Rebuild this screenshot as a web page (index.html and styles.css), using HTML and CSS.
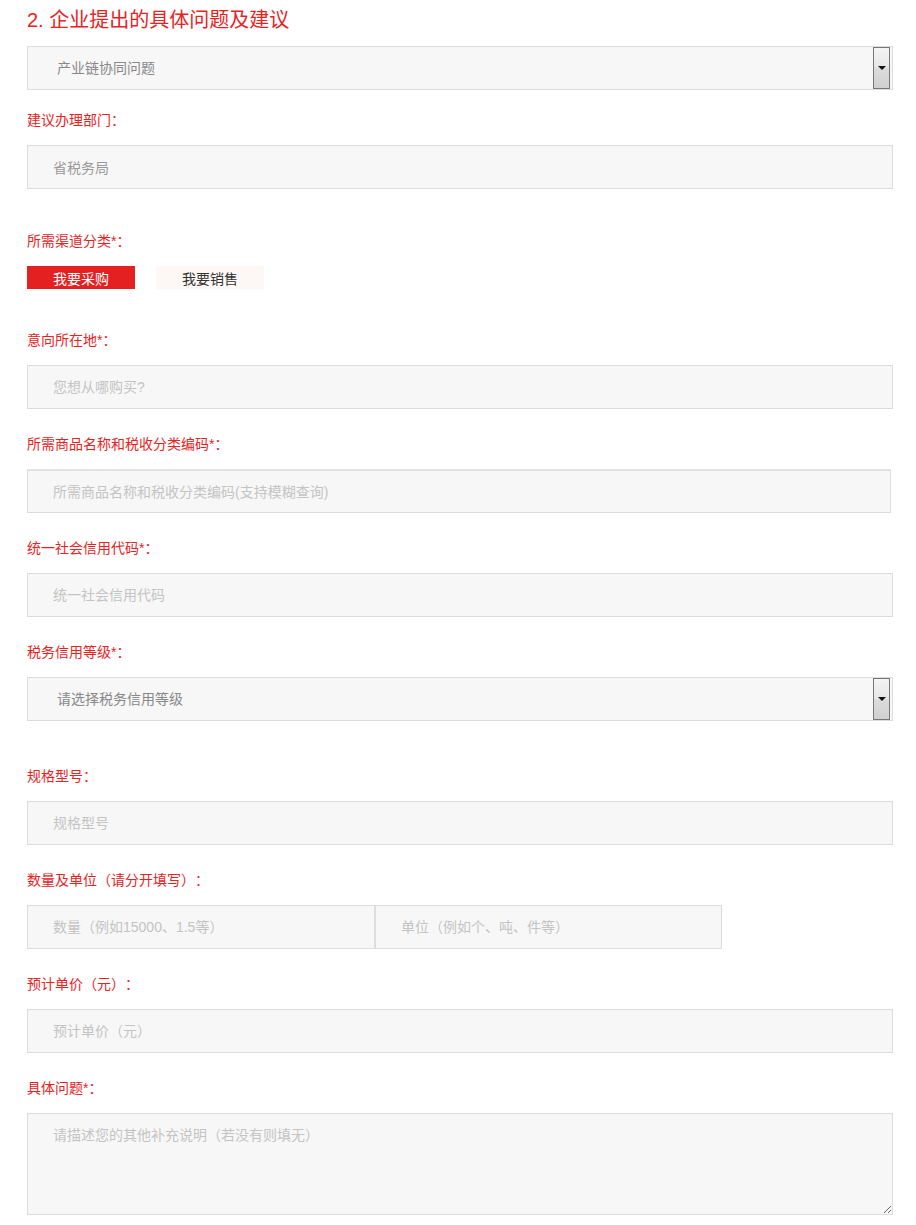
FILE: index.html
```html
<!DOCTYPE html>
<html lang="zh-CN">
<head>
    <meta charset="UTF-8">
    <meta name="viewport" content="width=device-width, initial-scale=1.0">
    <title>企业提出的具体问题及建议</title>
    <link rel="stylesheet" href="styles.css">
</head>
<body>
    <div class="form">
        <h2 class="title">2. 企业提出的具体问题及建议</h2>

        <div class="select-box first">
            <span class="select-text">产业链协同问题</span>
            <span class="select-arrow"></span>
        </div>

        <div class="field gap-sm">
            <label>建议办理部门：</label>
            <input type="text" class="input" value="省税务局" readonly>
        </div>

        <div class="field gap-lg">
            <label>所需渠道分类*：</label>
            <div class="tabs">
                <button class="tab active">我要采购</button>
                <button class="tab">我要销售</button>
            </div>
        </div>

        <div class="field gap-md">
            <label>意向所在地*：</label>
            <input type="text" class="input" placeholder="您想从哪购买?">
        </div>

        <div class="field">
            <label>所需商品名称和税收分类编码*：</label>
            <input type="text" class="input narrow" placeholder="所需商品名称和税收分类编码(支持模糊查询)">
        </div>

        <div class="field">
            <label>统一社会信用代码*：</label>
            <input type="text" class="input" placeholder="统一社会信用代码">
        </div>

        <div class="field">
            <label>税务信用等级*：</label>
            <div class="select-box">
                <span class="select-text">请选择税务信用等级</span>
                <span class="select-arrow"></span>
            </div>
        </div>

        <div class="field gap-xl">
            <label>规格型号：</label>
            <input type="text" class="input" placeholder="规格型号">
        </div>

        <div class="field">
            <label>数量及单位（请分开填写）：</label>
            <div class="pair">
                <input type="text" class="input half" placeholder="数量（例如15000、1.5等）">
                <input type="text" class="input half" placeholder="单位（例如个、吨、件等）">
            </div>
        </div>

        <div class="field">
            <label>预计单价（元）：</label>
            <input type="text" class="input" placeholder="预计单价（元）">
        </div>

        <div class="field">
            <label>具体问题*：</label>
            <textarea class="input area" placeholder="请描述您的其他补充说明（若没有则填无）"></textarea>
        </div>
    </div>
</body>
</html>
```

FILE: styles.css
```css
body {
    margin: 0;
    background: #fff;
    font-family: "Microsoft YaHei", "Liberation Sans", "Noto Sans CJK SC", sans-serif;
    font-size: 14px;
    text-spacing-trim: space-all;
}

.form {
    width: 866px;
    margin-left: 27px;
    padding-bottom: 10px;
}

.title {
    margin: 0;
    padding-top: 6px;
    font-size: 20px;
    line-height: 28px;
    font-weight: normal;
    color: #e8221e;
}

.field {
    margin-top: 25px;
}

.field.gap-sm {
    margin-top: 20px;
}

.field.gap-md {
    margin-top: 41px;
}

.field.gap-lg {
    margin-top: 42px;
}

.field.gap-xl {
    margin-top: 45px;
}

label {
    display: block;
    line-height: 20px;
    margin-bottom: 15px;
    color: #e8221e;
}

.input {
    display: block;
    width: 100%;
    height: 44px;
    padding: 0 25px;
    box-sizing: border-box;
    border: 1px solid #ddd;
    background: #f7f7f7;
    font-family: inherit;
    font-size: 14px;
    color: #999;
    outline: none;
}

.input::placeholder {
    color: #c4c4c4;
}

.input.narrow {
    width: 864px;
    border-top: 2px solid #e2e2e2;
}

.pair {
    display: flex;
}

.input.half {
    width: 348px;
}

.input.half + .input.half {
    width: 347px;
}

.input.area {
    height: 102px;
    padding-top: 11px;
    line-height: 20px;
}

.select-box {
    display: flex;
    align-items: stretch;
    height: 44px;
    box-sizing: border-box;
    border: 1px solid #ddd;
    background: #f7f7f7;
}

.select-box.first {
    margin-top: 12px;
}

.select-text {
    flex: 1;
    padding-left: 29px;
    line-height: 42px;
    color: #888;
}

.select-arrow {
    width: 15px;
    margin: 0 2px 0 0;
    border: 1px solid #777;
    background: linear-gradient(#f4f4f4 0%, #e6e6e6 50%, #dcdcdc 50%, #d0d0d0 100%);
    display: flex;
    align-items: center;
    justify-content: center;
}

.select-arrow::after {
    content: "";
    border-left: 4px solid transparent;
    border-right: 4px solid transparent;
    border-top: 4px solid #111;
}

.tabs {
    display: flex;
    gap: 21px;
}

.tab {
    display: block;
    width: 108px;
    height: 23px;
    padding: 0;
    border: none;
    background: #fdf7f5;
    color: #333;
    font-family: inherit;
    font-size: 14px;
    cursor: pointer;
}

.tab.active {
    background: #e42020;
    color: #fff;
}
```
